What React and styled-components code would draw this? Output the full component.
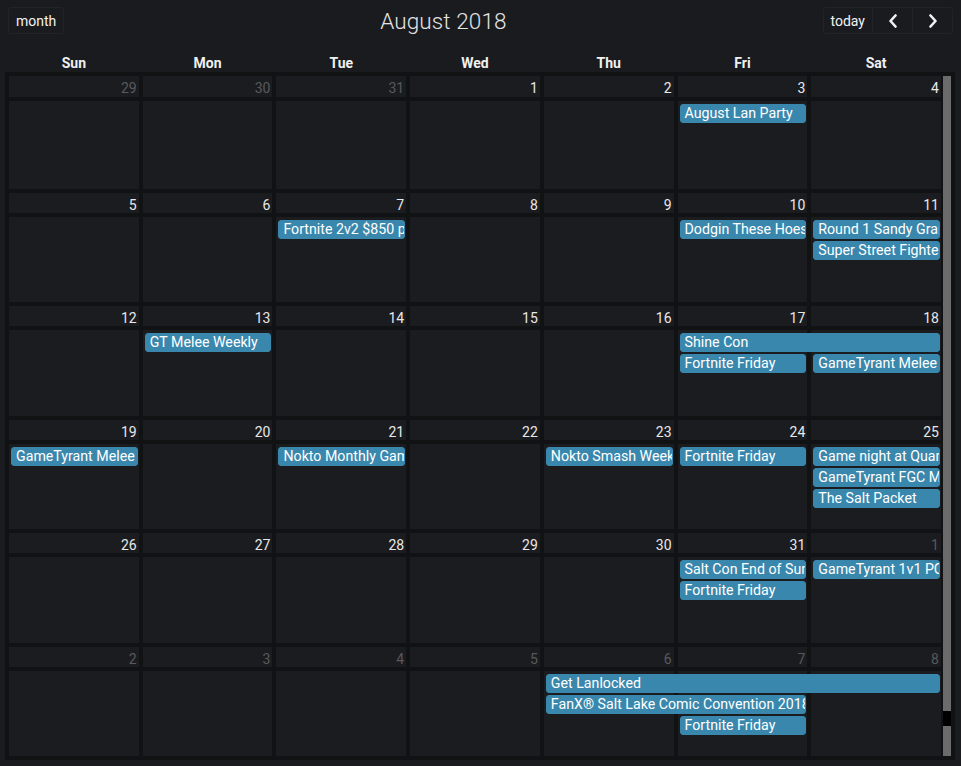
import React from 'react';
import styled, { createGlobalStyle } from 'styled-components';

const weeks = [
  {
    days: [29, 30, 31, 1, 2, 3, 4],
    other: [0, 1, 2],
    events: [{ title: 'August Lan Party', col: 5, span: 1, row: 0 }],
  },
  {
    days: [5, 6, 7, 8, 9, 10, 11],
    other: [],
    events: [
      { title: 'Fortnite 2v2 $850 pro-am', col: 2, span: 1, row: 0 },
      { title: 'Dodgin These Hoes', col: 5, span: 1, row: 0 },
      { title: 'Round 1 Sandy Grand Opening', col: 6, span: 1, row: 0 },
      { title: 'Super Street Fighter II', col: 6, span: 1, row: 1 },
    ],
  },
  {
    days: [12, 13, 14, 15, 16, 17, 18],
    other: [],
    events: [
      { title: 'GT Melee Weekly', col: 1, span: 1, row: 0 },
      { title: 'Shine Con', col: 5, span: 2, row: 0 },
      { title: 'Fortnite Friday', col: 5, span: 1, row: 1 },
      { title: 'GameTyrant Melee', col: 6, span: 1, row: 1 },
    ],
  },
  {
    days: [19, 20, 21, 22, 23, 24, 25],
    other: [],
    events: [
      { title: 'GameTyrant Melee', col: 0, span: 1, row: 0 },
      { title: 'Nokto Monthly Games', col: 2, span: 1, row: 0 },
      { title: 'Nokto Smash Weekly', col: 4, span: 1, row: 0 },
      { title: 'Fortnite Friday', col: 5, span: 1, row: 0 },
      { title: 'Game night at Quarters', col: 6, span: 1, row: 0 },
      { title: 'GameTyrant FGC Monthly', col: 6, span: 1, row: 1 },
      { title: 'The Salt Packet', col: 6, span: 1, row: 2 },
    ],
  },
  {
    days: [26, 27, 28, 29, 30, 31, 1],
    other: [6],
    events: [
      { title: 'Salt Con End of Summer', col: 5, span: 1, row: 0 },
      { title: 'Fortnite Friday', col: 5, span: 1, row: 1 },
      { title: 'GameTyrant 1v1 PC', col: 6, span: 1, row: 0 },
    ],
  },
  {
    days: [2, 3, 4, 5, 6, 7, 8],
    other: [0, 1, 2, 3, 4, 5, 6],
    events: [
      { title: 'Get Lanlocked', col: 4, span: 3, row: 0 },
      { title: 'FanX® Salt Lake Comic Convention 2018', col: 4, span: 2, row: 1 },
      { title: 'Fortnite Friday', col: 5, span: 1, row: 2 },
    ],
  },
];

const dayNames = ['Sun', 'Mon', 'Tue', 'Wed', 'Thu', 'Fri', 'Sat'];

const GlobalStyle = createGlobalStyle`
  body {
    margin: 0;
    background: #1a1b1f;
    font-family: Roboto, "Liberation Sans", sans-serif;
    color: #e6e6e6;
  }
`;

const Page = styled.div`
  padding: 7px 6px 6px 5px;
`;

const Toolbar = styled.div`
  display: flex;
  align-items: center;
  height: 27px;
  padding: 0 2px 0 3px;
`;

const Title = styled.h2`
  flex: 1;
  margin: 0;
  text-align: center;
  font-size: 22.5px;
  font-weight: 300;
  color: #e4e4e4;
  letter-spacing: 0.1px;
`;

const ButtonGroup = styled.div`
  display: flex;
  border: 1px solid #222328;
  border-radius: 3px;
  height: 27px;
  box-sizing: border-box;
`;

const Button = styled.button`
  background: transparent;
  border: none;
  border-left: ${(p) => (p.first ? 'none' : '1px solid #222328')};
  color: #f2f2f2;
  font-family: Roboto, "Liberation Sans", sans-serif;
  font-size: 14px;
  padding: 0 ${(p) => (p.icon ? '0' : '7px')};
  width: ${(p) => (p.icon ? '40px' : 'auto')};
  display: flex;
  align-items: center;
  justify-content: center;
  cursor: pointer;
`;

const HeadRow = styled.div`
  display: grid;
  grid-template-columns: repeat(7, 1fr);
  column-gap: 4px;
  margin-top: 18px;
  padding: 0 14px 0 4px;
  height: 20px;
`;

const HeadCell = styled.div`
  text-align: center;
  font-size: 14px;
  font-weight: 700;
  color: #f0f0f0;
  line-height: 22px;
`;

const Board = styled.div`
  display: flex;
  gap: 2px;
  padding: 4px;
  height: 688px;
  box-sizing: border-box;
  background: #111214;
`;

const Weeks = styled.div`
  flex: 1;
  display: flex;
  flex-direction: column;
  gap: 4px;
`;

const Week = styled.div`
  flex: ${(p) => (p.first ? 'none' : 1)};
  height: ${(p) => (p.first ? '113px' : 'auto')};
  display: grid;
  grid-template-columns: repeat(7, 1fr);
  grid-template-rows: ${(p) => (p.first ? '21px' : '20px')} 4px 3px repeat(3, 21px) 1fr;
  column-gap: 4px;
  min-height: 0;
`;

const DayNum = styled.div`
  grid-row: 1;
  background: #1b1c20;
  text-align: right;
  padding-right: 2px;
  font-size: 14px;
  line-height: 24px;
  color: ${(p) => (p.other ? '#58595c' : '#e8e8e8')};
`;

const DayBody = styled.div`
  grid-row: 3 / -1;
  background: #1b1c20;
`;

const Event = styled.div`
  grid-row: ${(p) => p.row + 4};
  grid-column: ${(p) => p.col + 1} / span ${(p) => p.span};
  align-self: start;
  height: 19px;
  margin: 0 1px 0 2px;
  background: #3a87ad;
  border: 1px solid #3a87ad;
  border-radius: 3px;
  box-sizing: border-box;
  padding-left: 4px;
  font-size: 14.2px;
  line-height: 17px;
  color: #ffffff;
  white-space: nowrap;
  overflow: hidden;
`;

const Scrollbar = styled.div`
  width: 8px;
  display: flex;
  flex-direction: column;
`;

const Thumb = styled.div`
  background: #6b6b6b;
  flex: ${(p) => (p.grow ? 1 : 'none')};
  height: ${(p) => (p.h ? `${p.h}px` : 'auto')};
`;

const Gap = styled.div`
  background: #000;
  height: 15px;
`;

const Chevron = ({ dir }) => (
  <svg width="10" height="14" viewBox="0 0 10 14">
    <path
      d={dir === 'left' ? 'M7.5 1.5 L2.5 7 L7.5 12.5' : 'M2.5 1.5 L7.5 7 L2.5 12.5'}
      fill="none"
      stroke="#f2f2f2"
      strokeWidth="2.6"
      strokeLinecap="round"
      strokeLinejoin="round"
    />
  </svg>
);

export default function App() {
  return (
    <Page>
      <GlobalStyle />
      <Toolbar>
        <ButtonGroup>
          <Button first>month</Button>
        </ButtonGroup>
        <Title>August 2018</Title>
        <ButtonGroup>
          <Button first>today</Button>
          <Button icon>
            <Chevron dir="left" />
          </Button>
          <Button icon>
            <Chevron dir="right" />
          </Button>
        </ButtonGroup>
      </Toolbar>

      <HeadRow>
        {dayNames.map((d) => (
          <HeadCell key={d}>{d}</HeadCell>
        ))}
      </HeadRow>

      <Board>
        <Weeks>
          {weeks.map((w, wi) => (
            <Week key={wi} first={wi === 0}>
              {w.days.map((d, i) => (
                <DayNum key={`n${i}`} other={w.other.includes(i)} style={{ gridColumn: i + 1 }}>
                  {d}
                </DayNum>
              ))}
              {w.days.map((d, i) => (
                <DayBody key={`b${i}`} style={{ gridColumn: i + 1 }} />
              ))}
              {w.events.map((e, ei) => (
                <Event key={ei} row={e.row} col={e.col} span={e.span}>
                  {e.title}
                </Event>
              ))}
            </Week>
          ))}
        </Weeks>
        <Scrollbar>
          <Thumb grow />
          <Gap />
          <Thumb h={30} />
        </Scrollbar>
      </Board>
    </Page>
  );
}
